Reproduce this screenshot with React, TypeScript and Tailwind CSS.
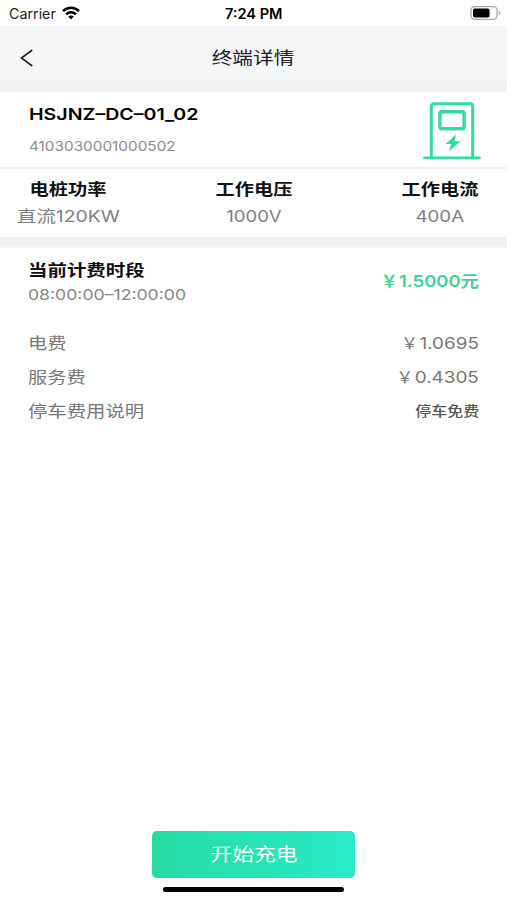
import React from 'react';

type StretchProps = { className: string; children: React.ReactNode };

// Single-line label drawn with wide letterforms
function Wide({ className, children }: StretchProps) {
  return <span className={`block w-fit whitespace-nowrap ${className}`}>{children}</span>;
}

function Yuan() {
  return <span className="-ml-[3px] mr-[0.5px] inline-block origin-center scale-x-[0.9]">￥</span>;
}

function StatusBar() {
  return (
    <header className="grid h-[26px] grid-cols-3 items-center bg-white pl-[9px] pr-[6px] pt-px text-black">
      <div className="flex items-center gap-[7px]">
        <Wide className="text-[14px] leading-[26px] origin-left scale-x-[1.02] text-[#222]">Carrier</Wide>
        <svg className="-mt-[2px] h-[14px] w-[18px]" viewBox="0 0 18 14" fill="none" stroke="#000" strokeWidth="2.5">
          <path d="M1 5.1C5.6.7 12.4.7 17 5.1" />
          <path d="M4.1 8.3c2.8-2.6 7-2.6 9.8 0" />
          <path d="M6.2 10.6c1.6-1.5 4-1.5 5.6 0L9 13.6z" fill="#000" stroke="none" />
        </svg>
      </div>
      <Wide className="-ml-[2px] justify-self-center text-[14px] font-semibold leading-[26px] origin-center scale-x-[1.04]">7:24 PM</Wide>
      <svg className="-mt-[2px] h-[14px] w-[31px] justify-self-end" viewBox="0 0 31 14">
        <rect x="1" y=".7" width="26" height="12.6" rx="3.6" fill="#fff" stroke="#aaa" strokeWidth="1.3" />
        <rect x="3" y="2.5" width="16.5" height="9" rx="1.8" fill="#000" />
        <path d="M28.6 4.8c2.4.8 2.4 3.6 0 4.4z" fill="#aaa" />
      </svg>
    </header>
  );
}

function NavBar() {
  return (
    <nav className="grid h-[54px] grid-cols-3 items-center bg-[#f5f6f8] px-[20px] pt-[11px]">
      <svg className="-mt-px h-[18px] w-[14px]" viewBox="0 0 14 18" fill="none" stroke="#222" strokeWidth="1.6">
        <path d="M12.3 1 1.4 9l10.9 8" />
      </svg>
      <Wide className="-mt-px justify-self-center text-[17.5px] leading-[26px] text-[#222] origin-center scale-x-[1.18]">终端详情</Wide>
    </nav>
  );
}

function ChargerIcon() {
  return (
    <svg className="h-[58px] w-[58px]" viewBox="0 0 58 58" fill="none" stroke="#32dba2">
      <path d="M8.3 55V4.5c0-1.7 1-2.7 2.7-2.7h36c1.7 0 2.7 1 2.7 2.7V55" strokeWidth="3" />
      <rect x="16.9" y="9.7" width="24.2" height="17" rx="2" strokeWidth="3.4" />
      <path d="M1.5 55.8h55" strokeWidth="2.8" strokeLinecap="round" />
      <path d="M33.2 32.2 22.6 42h5.6l-2.2 7.3 11.8-10.1h-6.3z" fill="#32dba2" stroke="none" />
    </svg>
  );
}

export default function App() {
  return (
    <main className="flex h-[900px] w-[507px] flex-col overflow-hidden bg-white font-['Inter','Noto_Sans_CJK_SC',sans-serif]">
      <StatusBar />
      <NavBar />
      <div className="h-[12px] bg-[#eff1f2]" />

      <section className="flex h-[77px] justify-between border-b-2 border-[#f0f0f1] pl-[29px] pr-[26.5px]">
        <div className="flex flex-col pt-[10px]">
          <Wide className="text-[16px] font-semibold leading-[24px] text-black origin-left scale-x-[1.225]">HSJNZ–DC–01_02</Wide>
          <Wide className="mt-[9px] text-[13.5px] leading-[22px] text-[#8c8c8c] origin-left scale-x-[1.135]">4103030001000502</Wide>
        </div>
        <div className="pt-[10px]">
          <ChargerIcon />
        </div>
      </section>

      <section className="flex h-[68px] justify-between pl-[17px] pr-[28px] pt-[7px]">
        <div className="flex w-[102px] flex-col items-center">
          <Wide className="text-[16px] font-bold leading-[26px] text-[#111] origin-center scale-x-[1.2]">电桩功率</Wide>
          <Wide className="text-[16px] leading-[29px] text-[#808080] origin-center scale-x-[1.21]">直流120KW</Wide>
        </div>
        <div className="flex w-[90px] flex-col items-center pr-[12px]">
          <Wide className="text-[16px] font-bold leading-[26px] text-[#111] origin-center scale-x-[1.2]">工作电压</Wide>
          <Wide className="text-[16px] leading-[29px] text-[#808080] origin-center scale-x-[1.16]">1000V</Wide>
        </div>
        <div className="flex w-[78px] flex-col items-center">
          <Wide className="text-[16px] font-bold leading-[26px] text-[#111] origin-center scale-x-[1.2]">工作电流</Wide>
          <Wide className="text-[16px] leading-[29px] text-[#808080] origin-center scale-x-[1.17]">400A</Wide>
        </div>
      </section>

      <div className="h-[11px] bg-gradient-to-b from-[#eeeff0] from-60% to-[#f6f8f8]" />

      <section className="flex flex-1 flex-col pl-[28px] pr-[28px] pt-[9px]">
        <div className="flex h-[69px] justify-between">
          <div>
            <Wide className="text-[16px] font-bold leading-[26px] text-[#111] origin-left scale-x-[1.215]">当前计费时段</Wide>
            <Wide className="text-[15px] leading-[24px] text-[#858585] origin-left scale-x-[1.175]">08:00:00–12:00:00</Wide>
          </div>
          <Wide className="pt-[11px] text-[16px] font-semibold leading-[26px] text-[#3fd39b] origin-right scale-x-[1.15]"><Yuan />1.5000元</Wide>
        </div>
        <div className="flex h-[34px] items-center justify-between text-[16px] text-[#777]">
          <Wide className="origin-left scale-x-[1.2]">电费</Wide>
          <Wide className="text-[#777] origin-right scale-x-[1.18]"><Yuan />1.0695</Wide>
        </div>
        <div className="flex h-[34px] items-center justify-between text-[16px] text-[#777]">
          <Wide className="origin-left scale-x-[1.2]">服务费</Wide>
          <Wide className="text-[#777] origin-right scale-x-[1.18]"><Yuan />0.4305</Wide>
        </div>
        <div className="flex h-[34px] items-center justify-between text-[16px] text-[#777]">
          <Wide className="-mt-px origin-left scale-x-[1.21]">停车费用说明</Wide>
          <Wide className="pt-[2px] text-[13.3px] font-medium text-[#555] origin-right scale-x-[1.2]">停车免费</Wide>
        </div>
      </section>

      <footer className="flex h-[69px] flex-col items-center">
        <button className="flex h-[47px] w-[203px] items-center justify-center rounded-[5px] bg-gradient-to-r from-[#25dba1] to-[#29ebc8] text-[18px] text-white">
          <Wide className="origin-center scale-x-[1.21]">开始充电</Wide>
        </button>
        <div className="mt-[9px] h-[5px] w-[181px] rounded-full bg-black" />
      </footer>
    </main>
  );
}
